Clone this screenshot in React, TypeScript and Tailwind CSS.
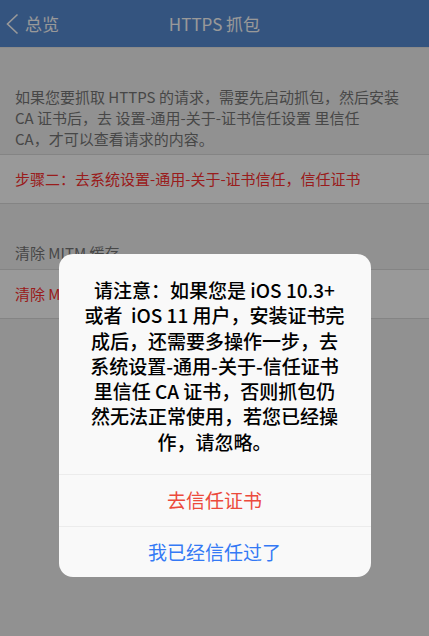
const font = { fontFamily: '"Noto Sans CJK SC", "Noto Sans", sans-serif' }

function Header() {
  return (
    <header className="relative flex h-[48px] items-center justify-center border-b border-[#e6e6e6] bg-[#588cd4] text-white">
      <button type="button" className="absolute left-0 top-0 flex h-full items-center gap-[6px] pl-[6px] text-[17px]">
        <svg width="13" height="22" viewBox="0 0 13 22" fill="none" stroke="currentColor" strokeWidth="1.6">
          <polyline points="11.5,1.5 1.5,11 11.5,20.5" />
        </svg>
        <span>总览</span>
      </button>
      <h1 className="text-[17px]">HTTPS 抓包</h1>
    </header>
  )
}

function Row({ children }: { children: React.ReactNode }) {
  return (
    <div className="flex h-[50px] items-center border-y border-[#dcdcdc] bg-white px-[15px] text-[15px] text-[#ff3030]">
      {children}
    </div>
  )
}

function Dialog() {
  return (
    <div className="w-[312px] overflow-hidden rounded-[14px] bg-[#f9f9f9]">
      <p className="px-[18px] pb-[20px] pt-[23px] text-center text-[19px] font-medium leading-[25.3px] text-black">
        请注意：如果您是 iOS 10.3+
        <br />
        或者&nbsp; iOS 11 用户，安装证书完
        <br />
        成后，还需要多操作一步，去
        <br />
        系统设置-通用-关于-信任证书
        <br />
        里信任 CA 证书，否则抓包仍
        <br />
        然无法正常使用，若您已经操
        <br />
        作，请忽略。
      </p>
      <button
        type="button"
        className="flex h-[52px] w-full items-center justify-center border-t border-[#ececec] text-[19px] text-[#ec4a3c]"
      >
        去信任证书
      </button>
      <button
        type="button"
        className="flex h-[51px] w-full items-center justify-center border-t border-[#ececec] text-[19px] text-[#3479f5]"
      >
        我已经信任过了
      </button>
    </div>
  )
}

export default function App() {
  return (
    <div className="relative h-[636px] w-full overflow-hidden bg-[#f2f2f2]" style={font}>
      <Header />
      <div className="px-[15px] pb-[5px] pt-[38px] text-[15px] leading-[21px] text-[#777]">
        如果您要抓取 HTTPS 的请求，需要先启动抓包，然后安装 CA 证书后，去 设置-通用-关于-证书信任设置 里信任
        <br />
        CA，才可以查看请求的内容。
      </div>
      <Row>步骤二：去系统设置-通用-关于-证书信任，信任证书</Row>
      <div className="px-[15px] pb-[6px] pt-[38px] text-[15px] leading-[21px] text-[#777]">清除 MITM 缓存</div>
      <Row>清除 MITM 缓存</Row>

      {/* modal overlay */}
      <div className="absolute inset-0 flex flex-col items-center bg-black/40 pt-[254px]">
        <Dialog />
      </div>
    </div>
  )
}
